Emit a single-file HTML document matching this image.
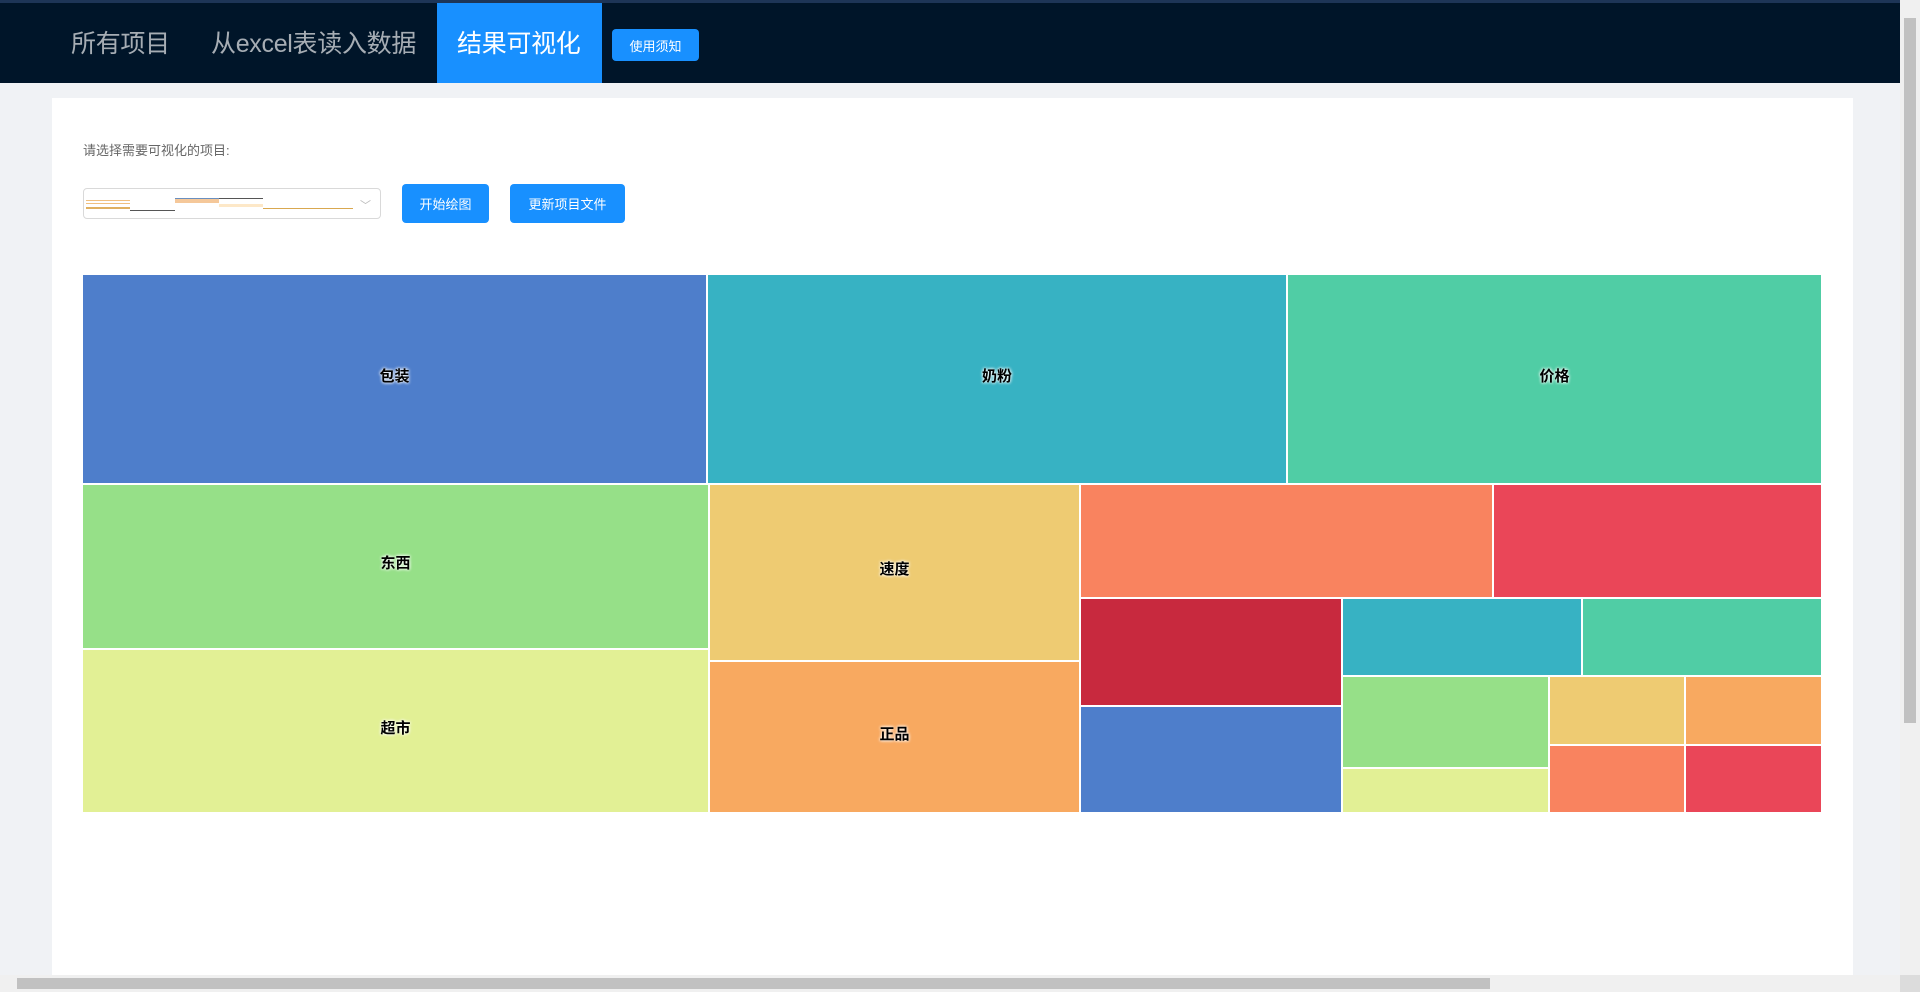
<!DOCTYPE html>
<html><head><meta charset="utf-8"><style>
*{margin:0;padding:0;box-sizing:border-box}
body{width:1920px;height:992px;overflow:hidden;background:#f0f2f5;font-family:"Liberation Sans","Noto Sans CJK SC",sans-serif;position:relative}
.a{position:absolute}
.top{left:0;top:0;width:1900px;height:83px;background:#001529;border-top:3px solid #1d3557}
.nav{color:#a6adb4;font-size:25px;top:27px;line-height:34px;letter-spacing:-0.3px}
.btn{background:#1890ff;color:#fff;border-radius:4px;font-size:13px;display:flex;align-items:center;justify-content:center}
.r{position:absolute;border:1px solid #fff;display:flex;align-items:center;justify-content:center;font-size:15px;font-weight:bold;color:#000;text-shadow:0 0 3px #fff,0 0 3px #fff;padding-bottom:8px}
</style></head><body>
<div class="a top"></div>
<div class="a nav" style="left:71px">所有项目</div>
<div class="a nav" style="left:211px">从excel表读入数据</div>
<div class="a" style="left:437px;top:3px;width:165px;height:80px;background:#1890ff"></div>
<div class="a nav" style="left:457px;color:#fff">结果可视化</div>
<div class="a btn" style="left:612px;top:29px;width:87px;height:32px">使用须知</div>

<div class="a" style="left:52px;top:98px;width:1801px;height:877px;background:#fff"></div>
<div class="a" style="left:83px;top:140px;font-size:13px;color:#666">请选择需要可视化的项目:</div>
<div class="a" style="left:83px;top:188px;width:298px;height:31px;border:1px solid #d9d9d9;border-radius:4px;background:#fff">
 <div class="a" style="left:2px;top:11px;width:44px;height:1px;background:#f0c080"></div>
 <div class="a" style="left:2px;top:14px;width:44px;height:1px;background:#f0c080"></div>
 <div class="a" style="left:2px;top:18px;width:44px;height:2px;background:#e0b060"></div>
 <div class="a" style="left:46px;top:21px;width:45px;height:1px;background:#555"></div>
 <div class="a" style="left:91px;top:9px;width:44px;height:5px;background:#f5c89a;border-top:1px solid #6a8fbf"></div>
 <div class="a" style="left:135px;top:9px;width:44px;height:1px;background:#555"></div>
 <div class="a" style="left:135px;top:15px;width:44px;height:3px;background:#fde8c8"></div>
 <div class="a" style="left:179px;top:19px;width:90px;height:1px;background:#d9a850"></div>
 <div class="a" style="left:276px;top:8px;font-size:11px;color:#bbb">﹀</div>
</div>
<div class="a btn" style="left:402px;top:184px;width:87px;height:39px">开始绘图</div>
<div class="a btn" style="left:510px;top:184px;width:115px;height:39px">更新项目文件</div>

<div class="r" style="left:82px;top:274px;width:625px;height:210px;background:#4e7ecb">包装</div>
<div class="r" style="left:707px;top:274px;width:580px;height:210px;background:#37b2c3">奶粉</div>
<div class="r" style="left:1287px;top:274px;width:535px;height:210px;background:#50cda5">价格</div>
<div class="r" style="left:82px;top:484px;width:627px;height:165px;background:#96e088">东西</div>
<div class="r" style="left:82px;top:649px;width:627px;height:164px;background:#e2f095">超市</div>
<div class="r" style="left:709px;top:484px;width:371px;height:177px;background:#eecb72">速度</div>
<div class="r" style="left:709px;top:661px;width:371px;height:152px;background:#f8a960">正品</div>
<div class="r" style="left:1080px;top:484px;width:413px;height:114px;background:#f9835f"></div>
<div class="r" style="left:1493px;top:484px;width:329px;height:114px;background:#ea4658"></div>
<div class="r" style="left:1080px;top:598px;width:262px;height:108px;background:#c8293e"></div>
<div class="r" style="left:1080px;top:706px;width:262px;height:107px;background:#4e7ecb"></div>
<div class="r" style="left:1342px;top:598px;width:240px;height:78px;background:#37b2c3"></div>
<div class="r" style="left:1582px;top:598px;width:240px;height:78px;background:#50cda5"></div>
<div class="r" style="left:1342px;top:676px;width:207px;height:92px;background:#96e088"></div>
<div class="r" style="left:1342px;top:768px;width:207px;height:45px;background:#e2f095"></div>
<div class="r" style="left:1549px;top:676px;width:136px;height:69px;background:#eecb72"></div>
<div class="r" style="left:1549px;top:745px;width:136px;height:68px;background:#f9835f"></div>
<div class="r" style="left:1685px;top:676px;width:137px;height:69px;background:#f8a960"></div>
<div class="r" style="left:1685px;top:745px;width:137px;height:68px;background:#ea4658"></div>

<div class="a" style="left:1900px;top:0;width:20px;height:975px;background:#f0f0f0"></div>
<div class="a" style="left:1904px;top:18px;width:12px;height:705px;background:#c1c1c1"></div>
<div class="a" style="left:0;top:975px;width:1900px;height:17px;background:#f0f0f0"></div>
<div class="a" style="left:17px;top:978px;width:1473px;height:11px;background:#c1c1c1"></div>
<div class="a" style="left:1900px;top:975px;width:20px;height:17px;background:#dcdcdc"></div>
</body></html>
